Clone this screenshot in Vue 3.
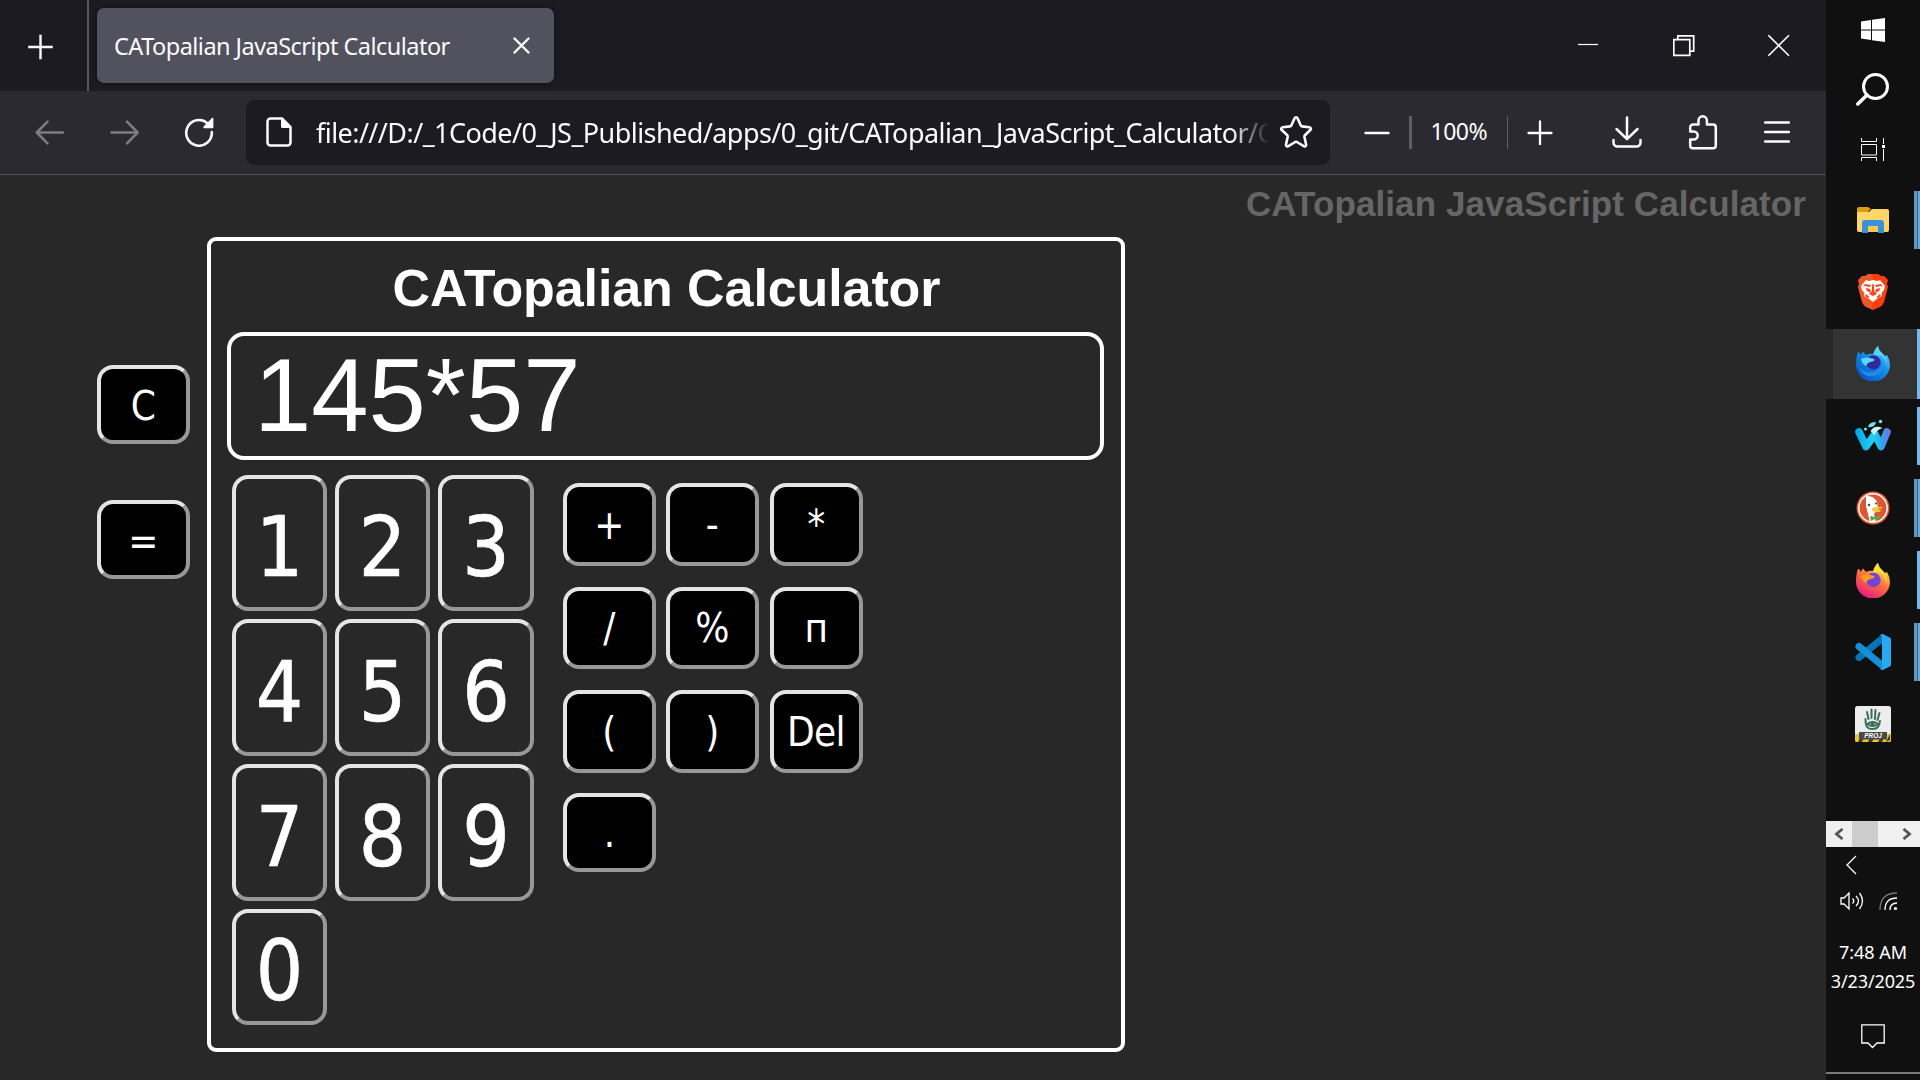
<script setup>
import { ref } from 'vue'

const expression = ref('145*57')
const digits = ['1', '2', '3', '4', '5', '6', '7', '8', '9', '0']
const operators = ['+', '-', '*', '/', '%', 'п', '(', ')', 'Del', '.']
const url = 'file:///D:/_1Code/0_JS_Published/apps/0_git/CATopalian_JavaScript_Calculator/C'
</script>

<template>
  <div class="desktop">
    <main class="browser">
      <header class="tabbar">
        <button class="newtab" aria-label="New tab">
          <svg width="26" height="26" viewBox="0 0 26 26"><path d="M12.500 .7v24.6M.2 13h24.6" stroke="#fbfbfe" stroke-width="2.4" /></svg>
        </button>
        <div class="tab">
          <span class="tab-title">CATopalian JavaScript Calculator</span>
          <svg width="18" height="18" viewBox="0 0 18 18"><path d="M1.500 1.500l14 14M15.500 1.500l-14 14" stroke="#fbfbfe" stroke-width="2.400" stroke-linecap="round" /></svg>
        </div>
        <div class="window-controls">
          <svg width="22" height="24" viewBox="0 0 22 24"><path d="M0 10.500h20" stroke="#fff" stroke-width="1.2" /></svg>
          <svg width="22" height="24" viewBox="0 0 22 24" fill="none" stroke="#fff" stroke-width="1.7"><path d="M.8 5.700h16v15.600H.8zM4.800 5.500V1.800h15.900v15.400h-4" /></svg>
          <svg width="22" height="24" viewBox="0 0 22 24"><path d="M.4 1.200l20.6 20.6M21 1.2L.4 21.8" stroke="#fff" stroke-width="1.6" /></svg>
        </div>
      </header>

      <nav class="toolbar">
        <svg class="back" width="30" height="26" viewBox="0 0 30 26" fill="none" stroke="#7d7c85" stroke-width="2.5" stroke-linecap="round" stroke-linejoin="round"><path d="M29 13.500H3M13.500 2.700L2.800 13.500l10.700 10.800" /></svg>
        <svg class="forward" width="30" height="26" viewBox="0 0 30 26" fill="none" stroke="#7d7c85" stroke-width="2.5" stroke-linecap="round" stroke-linejoin="round"><path d="M1.500 13.500h26M17 2.700L27.700 13.500 17 24.300" /></svg>
        <svg class="reload" width="30" height="30" viewBox="0 0 30 30"><path d="M23.400 6.200A12.800 12.800 0 1 0 27.800 15" fill="none" stroke="#fbfbfe" stroke-width="2.600" stroke-linecap="round" /><path d="M29.400 1.500v8.700a1 1 0 0 1-1 1h-8.100c-1 0-1.300-1-.7-1.700L28 1c.6-.6 1.400-.3 1.400.5z" fill="#fbfbfe" /></svg>
        <div class="urlbar">
          <svg class="doc" width="26" height="30" viewBox="0 0 26 30"><path d="M4.500 1.500h11.500l8.500 8.500v15.500a3 3 0 0 1-3 3h-17a3 3 0 0 1-3-3v-21a3 3 0 0 1 3-3z" fill="none" stroke="#fbfbfe" stroke-width="2.500" /><path d="M15 1v8.500a1.500 1.500 0 0 0 1.500 1.500H25z" fill="#fbfbfe" /></svg>
          <span class="url">{{ url }}</span>
          <svg class="star" width="34" height="34" viewBox="0 0 34 34"><path d="M15.600 3.200c.6-1.300 2.300-1.300 2.900 0l3.300 7.300c.2.500.7.800 1.200.9l7.400.8c1.500.2 2 1.800.9 2.800l-5.400 5.200c-.4.400-.6.900-.5 1.500l1.700 7.800c.3 1.400-1.100 2.400-2.400 1.700l-6.800-4.200a1.700 1.700 0 0 0-1.700 0l-6.800 4.200c-1.200.7-2.700-.3-2.400-1.700l1.700-7.800c.1-.6-.1-1.100-.5-1.500L2.800 15c-1.100-1-.6-2.600.9-2.800l7.400-.8c.5-.1 1-.4 1.200-.9z" fill="none" stroke="#fbfbfe" stroke-width="2.600" stroke-linejoin="round" /></svg>
        </div>
        <svg class="zoom-out" width="26" height="26" viewBox="0 0 26 26"><path d="M1.500 14h23" stroke="#fbfbfe" stroke-width="2.500" stroke-linecap="round" /></svg>
        <i class="sep thick"></i>
        <span class="percent">100%</span>
        <i class="sep"></i>
        <svg class="zoom-in" width="26" height="26" viewBox="0 0 26 26"><path d="M1.500 14h23M13 2.500v23" stroke="#fbfbfe" stroke-width="2.300" stroke-linecap="round" /></svg>
        <svg class="download" width="30" height="32" viewBox="0 0 30 32" fill="none" stroke="#fbfbfe" stroke-width="2.500" stroke-linecap="round" stroke-linejoin="round"><path d="M15 1.500v21M4.500 13L15 23.200 25.500 13M1.500 24v2.500a4 4 0 0 0 4 4h19a4 4 0 0 0 4-4V24" /></svg>
        <svg class="puzzle" width="32" height="36" viewBox="0 0 32 36"><path d="M11.500 10.500V6.500a4.200 4.200 0 0 1 8.400 0v4h6.100a2.800 2.800 0 0 1 2.800 2.800V31.500a2.800 2.800 0 0 1-2.800 2.800H6A2.800 2.800 0 0 1 3.200 31.500v-6h3.500a4 4 0 0 0 0-8H3.200v-4.200A2.800 2.800 0 0 1 6 10.500z" fill="none" stroke="#fbfbfe" stroke-width="2.500" stroke-linejoin="round" /></svg>
        <svg class="menu" width="26" height="22" viewBox="0 0 26 22"><path d="M1 1.500h24M1 11h24M1 20.500h24" stroke="#fbfbfe" stroke-width="2.400" stroke-linecap="round" /></svg>
      </nav>

      <section class="page">
        <h2 class="watermark">CATopalian JavaScript Calculator</h2>
        <div class="workspace">
          <div class="side">
            <button class="key dark">C</button>
            <button class="key dark">=</button>
          </div>
          <div class="calculator">
            <h1>CATopalian Calculator</h1>
            <div class="display">{{ expression }}</div>
            <div class="pads">
              <div class="numbers">
                <button v-for="d in digits" :key="d" class="key digit">{{ d }}</button>
              </div>
              <div class="operators">
                <button v-for="o in operators" :key="o" class="key dark">{{ o }}</button>
              </div>
            </div>
          </div>
        </div>
      </section>
    </main>

    <aside class="taskbar">
      <div class="system">
        <svg width="24" height="24" viewBox="0 0 24 24" fill="#fff"><path d="M0 3.400L10 2v9.500H0zM11 1.800L24 0v11.500H11zM0 12.500h10V22L0 20.600zM11 12.500h13V24l-13-1.800z" /></svg>
        <svg class="search" width="34" height="34" viewBox="0 0 34 34" fill="none" stroke="#fff" stroke-width="3"><circle cx="19.500" cy="13.500" r="12" /><path d="M11 22L1.800 31" stroke-width="3.500" stroke-linecap="round" /></svg>
        <svg class="taskview" width="24" height="24" viewBox="0 0 24 24" fill="none" stroke="#fff"><path d="M.5 6.500h15v10.500H.5zM.5 0v3.500h15V0M.5 23v-3.500h15V23M22.500 0v6M22.500 11v12" /><path d="M21 7h3v3h-3z" fill="#fff" stroke="none" /></svg>
      </div>

      <div class="apps">
        <div class="app double">
          <svg width="34" height="28" viewBox="0 0 34 28"><path d="M1 3a2 2 0 0 1 2-2h9l3 2-3 3H1z" fill="#dc9a13" /><path d="M1 6h12l3-3h15a2 2 0 0 1 2 2v19a2 2 0 0 1-2 2H3a2 2 0 0 1-2-2z" fill="#ffd667" /><path d="M6 27V17q0-3 3-3h16q3 0 3 3v10h-6v-7H12v7z" fill="#3991dc" /><path d="M12 20h10v6H12z" fill="#f8c94c" /></svg>
        </div>
        <div class="app brave">
          <svg width="30" height="36" viewBox="0 0 30 36"><defs><linearGradient id="brave"><stop offset=".45" stop-color="#f1562b" /><stop offset=".5" stop-color="#ff3d0a" /></linearGradient></defs><path d="M7 2l3-2h10l3 2 3 0 4 4-1 4 1 3-4 15q-1 3-4 5l-7 3-7-3q-3-2-4-5L0 13l1-3-1-4 4-4z" fill="url(#brave)" /><path d="M8 6l3 1 4-1 4 1 3-1 5 6-1 4-2.500 3 .5 3-4 2-5 4-5-4-4-2 .5-3L4 16l-1-4z" fill="#fff" /><path d="M7 10l6 1-1 2-5-1-2 1zm16 0l-6 1 1 2 5-1 2 1zM7.500 14l4.500 1 1 4-4-2zm15 0L18 15l-1 4 4-2zM14.300 10h1.400l.8 8 2.500 2-4 2-4-2 2.500-2zM8 20l3.500 3-1.500 1-3-2zm14 0l-3.500 3 1.500 1 3-2z" fill="#f9431a" /></svg>
        </div>
        <div class="app active">
          <svg width="34" height="36" viewBox="0 0 34 36"><defs><linearGradient id="dev" x1="1" y1="0" x2=".2" y2="1"><stop stop-color="#80ebff" /><stop offset=".45" stop-color="#1495ec" /><stop offset="1" stop-color="#0750bd" /></linearGradient></defs><path d="M2 7q2 0 2.500 3L7 6.500l3 3.500q4-2 7-1 2-6 5-8 1 5 4 7l3 3 2-1q3 5 3 10a17 16.500 0 0 1-34 0q0-8 2-13z" fill="url(#dev)" /><path d="M22 1q1 5 4 7 5 5 5 13-1-7-6-10L17 10q2-6 5-9z" fill="#53d3f4" /><circle cx="17.500" cy="17.500" r="7.200" fill="#312a9b" /><path d="M5 14q5-3 13 0 2 2-4 3-3 1-4 4-4-2-5-7z" fill="#5dd6fa" /><path d="M3 22q6 7 15 5 7-2 9-10 1 11-9 14Q7 33 3 22z" fill="#2789ed" /></svg>
        </div>
        <div class="app single waterfox">
          <svg width="36" height="34" viewBox="0 0 36 34"><defs><linearGradient id="water" gradientUnits="userSpaceOnUse" x1="0" y1="0" x2="36" y2="0"><stop stop-color="#08a4e7" /><stop offset=".5" stop-color="#20d2ef" /><stop offset=".75" stop-color="#2da4f0" /><stop offset="1" stop-color="#7a6fe0" /></linearGradient></defs><path d="M4 13l7 14.500L20 15l6 12.500L32 13" fill="none" stroke="url(#water)" stroke-width="7.500" stroke-linecap="round" stroke-linejoin="round" /><path d="M27.500 9q-8-3.500-12 3l4 4q2-5 8-7z" fill="#c9f8fa" /><path d="M13 8q1-5 8-5-1 6-8 5z" fill="#70e4e8" /><circle cx="25.500" cy="2.500" r="1.700" fill="#73eaf1" /><circle cx="10.500" cy="10" r="1.500" fill="#73eaf1" /></svg>
        </div>
        <div class="app double">
          <svg width="34" height="34" viewBox="0 0 34 34"><circle cx="17" cy="17" r="16.500" fill="#de5833" /><circle cx="17" cy="17" r="14.200" fill="#dc5631" stroke="#fff" stroke-width="1.500" /><path d="M10 5q8-1 11 6l1 7-4 5 2 8-6 .3L12 23 10 15z" fill="#fff" /><path d="M16 17q5-2 10-1v1.500h-7l6 1.500-1 2q-7 0-8-2z" fill="#fcc63f" /><path d="M14 25l5 1 5-2v5l-5-1-4 2z" fill="#55a744" /><circle cx="13" cy="14" r="1.200" fill="#344b66" /><circle cx="20" cy="12.500" r="1" fill="#344b66" /></svg>
        </div>
        <div class="app single">
          <svg width="34" height="36" viewBox="0 0 34 36"><defs><linearGradient id="fox" x1=".8" y1="0" x2=".25" y2="1"><stop stop-color="#fff44f" /><stop offset=".5" stop-color="#ff7139" /><stop offset="1" stop-color="#e31587" /></linearGradient></defs><path d="M2 7q2 0 2.500 3L7 6.500l3 3.500q4-2 7-1 2-6 5-8 1 5 4 7l3 3 2-1q3 5 3 10a17 16.500 0 0 1-34 0q0-8 2-13z" fill="url(#fox)" /><path d="M22 1q1 5 4 7 5 5 5 14-2-8-7-11l-7-1q2-6 5-9z" fill="#ffdf33" /><circle cx="17.500" cy="18" r="7.200" fill="#7544d5" /><path d="M5 14q5-3 13 0 2 2-4 3-3 1-4 4-4-2-5-7z" fill="#ff9a24" /></svg>
        </div>
        <div class="app double">
          <svg width="36" height="36" viewBox="0 0 36 36"><path d="M4 23.500L28 4" stroke="#0873b8" stroke-width="7" stroke-linecap="round" /><path d="M4 12.500L28 32" stroke="#168fd7" stroke-width="7" stroke-linecap="round" /><path d="M27 0l8 3.500 1 1.500v26l-1 1.500-8 3.500-2-1 2-1.500V2.500L25 1z" fill="#29a9f2" /></svg>
        </div>
        <div class="app">
          <svg width="36" height="36" viewBox="0 0 36 36"><rect width="36" height="36" rx="2.500" fill="#ededed" /><g fill="none" stroke="#396f5a" stroke-width="2" stroke-linecap="round"><path d="M13.500 13L12 6M16.500 12V3.500M20 13l.5-9M22.500 14l2-7M10.500 13c0 8 2 10 7 10S24 21 25 15" /><path d="M12 18q6-4 11 0-5 4-11 0z" /></g><circle cx="17.500" cy="18" r="2" fill="#396f5a" /><path d="M0 28h36v6a2 2 0 0 1-2 2H2a2 2 0 0 1-2-2z" fill="#f1c331" /><path d="M3 36l4-8h4l-4 8zm10 0l2-4h4l-2 4zm10 0l2-4h4l-2 4zm8 0l4-8v6z" fill="#363a37" /><rect x="4" y="26" width="28" height="7.500" fill="#464c49" /><text x="18" y="32.300" text-anchor="middle" class="proj">PROJ</text></svg>
        </div>
      </div>

      <div class="scroller">
        <svg width="10" height="12" viewBox="0 0 10 12"><path d="M8.500 1L2.500 6l6 5" /></svg>
        <i></i>
        <svg width="10" height="12" viewBox="0 0 10 12"><path d="M1.500 1l6 5-6 5" /></svg>
      </div>
      <div class="tray">
        <svg class="expand" width="12" height="20" viewBox="0 0 12 20"><path d="M10 1L1 10l9 9" /></svg>
        <div class="status">
          <svg width="24" height="20" viewBox="0 0 24 20"><path d="M1 7h3l5-5v16l-5-5H1zM12.500 7.500q2.500 2.500 0 5M16 5q5 5 0 10M19.500 2q6 8 0 16" /></svg>
          <svg width="20" height="20" viewBox="0 0 20 20"><path class="faint" d="M1 19Q1 2 18 2" /><path d="M6 19Q6 7 18 7M11 19q0-7 7-7" /><circle cx="16.500" cy="17.500" r="1.600" fill="#fff" /></svg>
        </div>
        <time class="clock">7:48 AM</time>
        <time class="date">3/23/2025</time>
        <svg class="notice" width="24" height="25" viewBox="0 0 24 25"><path d="M.8.800h22.400V19H16l-4.500 4.500L7 19H.8z" /></svg>
      </div>
    </aside>
  </div>
</template>

<style>
body {
  margin: 0;
  background: #101010;
  overflow: hidden;
}
</style>

<style scoped>
* { box-sizing: border-box; }
svg { display: block; flex: none; }
button { padding: 0; background: none; border: 0; color: inherit; }
h1, h2 { margin: 0; }

.desktop {
  display: flex;
  width: 1920px;
  height: 1080px;
  color: #fff;
  background: #101010;
  font-family: "Noto Sans", "Open Sans", sans-serif;
}
.browser {
  display: flex;
  flex-direction: column;
  width: 1826px;
  background: #282828;
}

.tabbar {
  display: flex;
  height: 91px;
  background: #1c1b22;
}
.newtab {
  display: flex;
  align-items: center;
  width: 89px;
  padding: 2px 0 0 28px;
  border-right: 2px solid #56555f;
}
.tab {
  display: flex;
  align-items: center;
  justify-content: space-between;
  width: 457px;
  height: 75px;
  margin: 8px 0 0 8px;
  padding: 0 23px 0 17px;
  border-radius: 7px;
  background: #52525e;
  box-shadow: 0 0 5px #0008;
}
.tab-title {
  font-size: 23.5px;
  letter-spacing: -0.53px;
  white-space: nowrap;
  color: #fbfbfe;
}
.window-controls {
  display: flex;
  gap: 73px;
  margin: 34px 36px 0 auto;
}

.toolbar {
  display: flex;
  align-items: center;
  height: 84px;
  padding: 0 36px 1px 34px;
  border-bottom: 1px solid #53525c;
  background: #2b2a33;
}
.forward { margin-left: 46px; }
.reload { margin-left: 43.5px; }
.urlbar {
  display: flex;
  align-items: center;
  width: 1084px;
  height: 65px;
  margin-left: 32.5px;
  padding: 0 17px 0 20px;
  border-radius: 8px;
  background: #1c1b22;
}
.url {
  width: 955px;
  margin-left: 24px;
  font-size: 27px;
  letter-spacing: -0.56px;
  white-space: nowrap;
  color: #fbfbfe;
  -webkit-mask-image: linear-gradient(to right, #000 915px, transparent 953px);
  mask-image: linear-gradient(to right, #000 915px, transparent 953px);
}
.star { margin-left: auto; }
.zoom-out { margin-left: 34px; }
.sep {
  width: 1.5px;
  height: 33px;
  background: #5f5e68;
}
.sep.thick {
  width: 3px;
  margin-left: 19px;
}
.percent {
  width: 57px;
  margin: 0 19px 2px 18.5px;
  font-size: 23px;
  letter-spacing: -0.5px;
}
.zoom-in { margin-left: 19px; }
.download { margin: 0 0 1px 59px; }
.puzzle { margin: 0 0 1px 45px; }
.menu { margin: 0 0 1px auto; }

.page {
  flex: 1;
  padding-right: 20px;
}
.watermark {
  height: 62px;
  padding-top: 8px;
  font: bold 35px/42px "Liberation Sans", Arial, sans-serif;
  letter-spacing: 0.1px;
  text-align: right;
  color: #666;
}
.workspace {
  display: flex;
  padding-left: 97px;
}
.side {
  display: flex;
  flex-direction: column;
  gap: 56px;
  width: 93px;
  margin: 128px 17px 0 0;
}
.side .key {
  height: 79px;
  padding-top: 3px;
}
.calculator {
  width: 918px;
  height: 815px;
  padding: 0 17px 0 16px;
  border: 4px solid #fff;
  border-radius: 9px;
}
h1 {
  height: 91px;
  padding: 17px 0 0 2px;
  font: bold 52px/60px "Liberation Sans", Arial, sans-serif;
  letter-spacing: -0.1px;
  text-align: center;
}
.display {
  height: 128px;
  padding-left: 23px;
  border: 4px solid #fff;
  border-radius: 17px;
  font: 103px/120px "Liberation Sans", Arial, sans-serif;
}
.pads {
  display: flex;
  gap: 29px;
  padding: 15px 0 0 5px;
}
.numbers {
  display: grid;
  grid-template-columns: 95px 95px 96px;
  grid-template-rows: 136px 137px 137px 116px;
  gap: 8px;
}
.operators {
  display: grid;
  grid-template-columns: 93px 94px 93px;
  grid-template-rows: 84px 83px 83px 79px;
  gap: 20px 10px;
  padding-top: 8px;
}
.operators .key:nth-child(-n + 6) { margin-bottom: 1px; }
.key {
  display: flex;
  align-items: center;
  justify-content: center;
  border: 4px solid;
  border-color: #e5e5e5 #989898 #989898 #e5e5e5;
  border-radius: 16px;
  color: #fff;
  font-family: "DejaVu Sans Condensed", "DejaVu Sans", sans-serif;
  font-stretch: condensed;
}
.key.dark {
  width: 93px;
  padding-right: 1px;
  background: #000;
  font-size: 40px;
  letter-spacing: -0.7px;
}
.key.digit {
  padding-top: 9px;
  font-size: 83px;
  -webkit-text-stroke: 0.7px #fff;
}

.taskbar {
  display: flex;
  flex-direction: column;
  width: 94px;
  background: #101010;
}
.system {
  display: flex;
  flex-direction: column;
  align-items: center;
  height: 184px;
  padding-top: 18px;
}
.search { margin-top: 31px; }
.taskview { margin-top: 31px; }
.apps {
  display: flex;
  flex-direction: column;
  height: 637px;
}
.app {
  position: relative;
  display: flex;
  align-items: center;
  justify-content: center;
  height: 72px;
}
.app.active {
  height: 70px;
  margin: 1px 0;
  background: linear-gradient(to right, #282828 7px, #333 7px);
}
.app.active svg { margin-bottom: 2px; }
.app::after {
  position: absolute;
  top: 7px;
  right: 0;
  height: 58px;
}
.app.single::after, .app.active::after, .app.double::after { content: ""; }
.app.single::after { width: 3px; background: #76b9ed; }
.app.active::after { top: 0; width: 3px; height: 70px; background: #76b9ed; }
.app.double::after {
  width: 6px;
  background: linear-gradient(to right, #6297c3 3px, #3b6587 3px, #3b6587 4px, #6ca9d8 4px);
}
.proj {
  font: italic bold 6.500px "Liberation Sans", sans-serif;
  fill: #fff;
}
.scroller {
  display: flex;
  align-items: center;
  height: 26px;
  padding: 0 8px;
  background: #f0f0f0;
}
.scroller i {
  width: 26px;
  height: 26px;
  margin: 0 24px 0 8px;
  background: #cdcdcd;
}
.scroller path {
  fill: none;
  stroke: #555;
  stroke-width: 2.800;
}
.tray {
  display: flex;
  flex-direction: column;
  height: 233px;
  padding-top: 8px;
}
.tray::after {
  content: "";
  height: 2px;
  margin-top: 23px;
  background: #7a7a7a;
}
.tray path {
  fill: none;
  stroke: #fff;
  stroke-width: 1.300;
}
.tray path.faint { stroke: #777; }
.expand { margin-left: 20px; }
.status {
  display: flex;
  gap: 15px;
  margin: 16px 0 0 14px;
}
.clock, .date {
  font-size: 18px;
  line-height: 29px;
  text-align: center;
  white-space: nowrap;
}
.clock { margin-top: 27px; }
.date { letter-spacing: -0.100px; }
.notice { margin: 28px 0 0 35px; }
</style>
